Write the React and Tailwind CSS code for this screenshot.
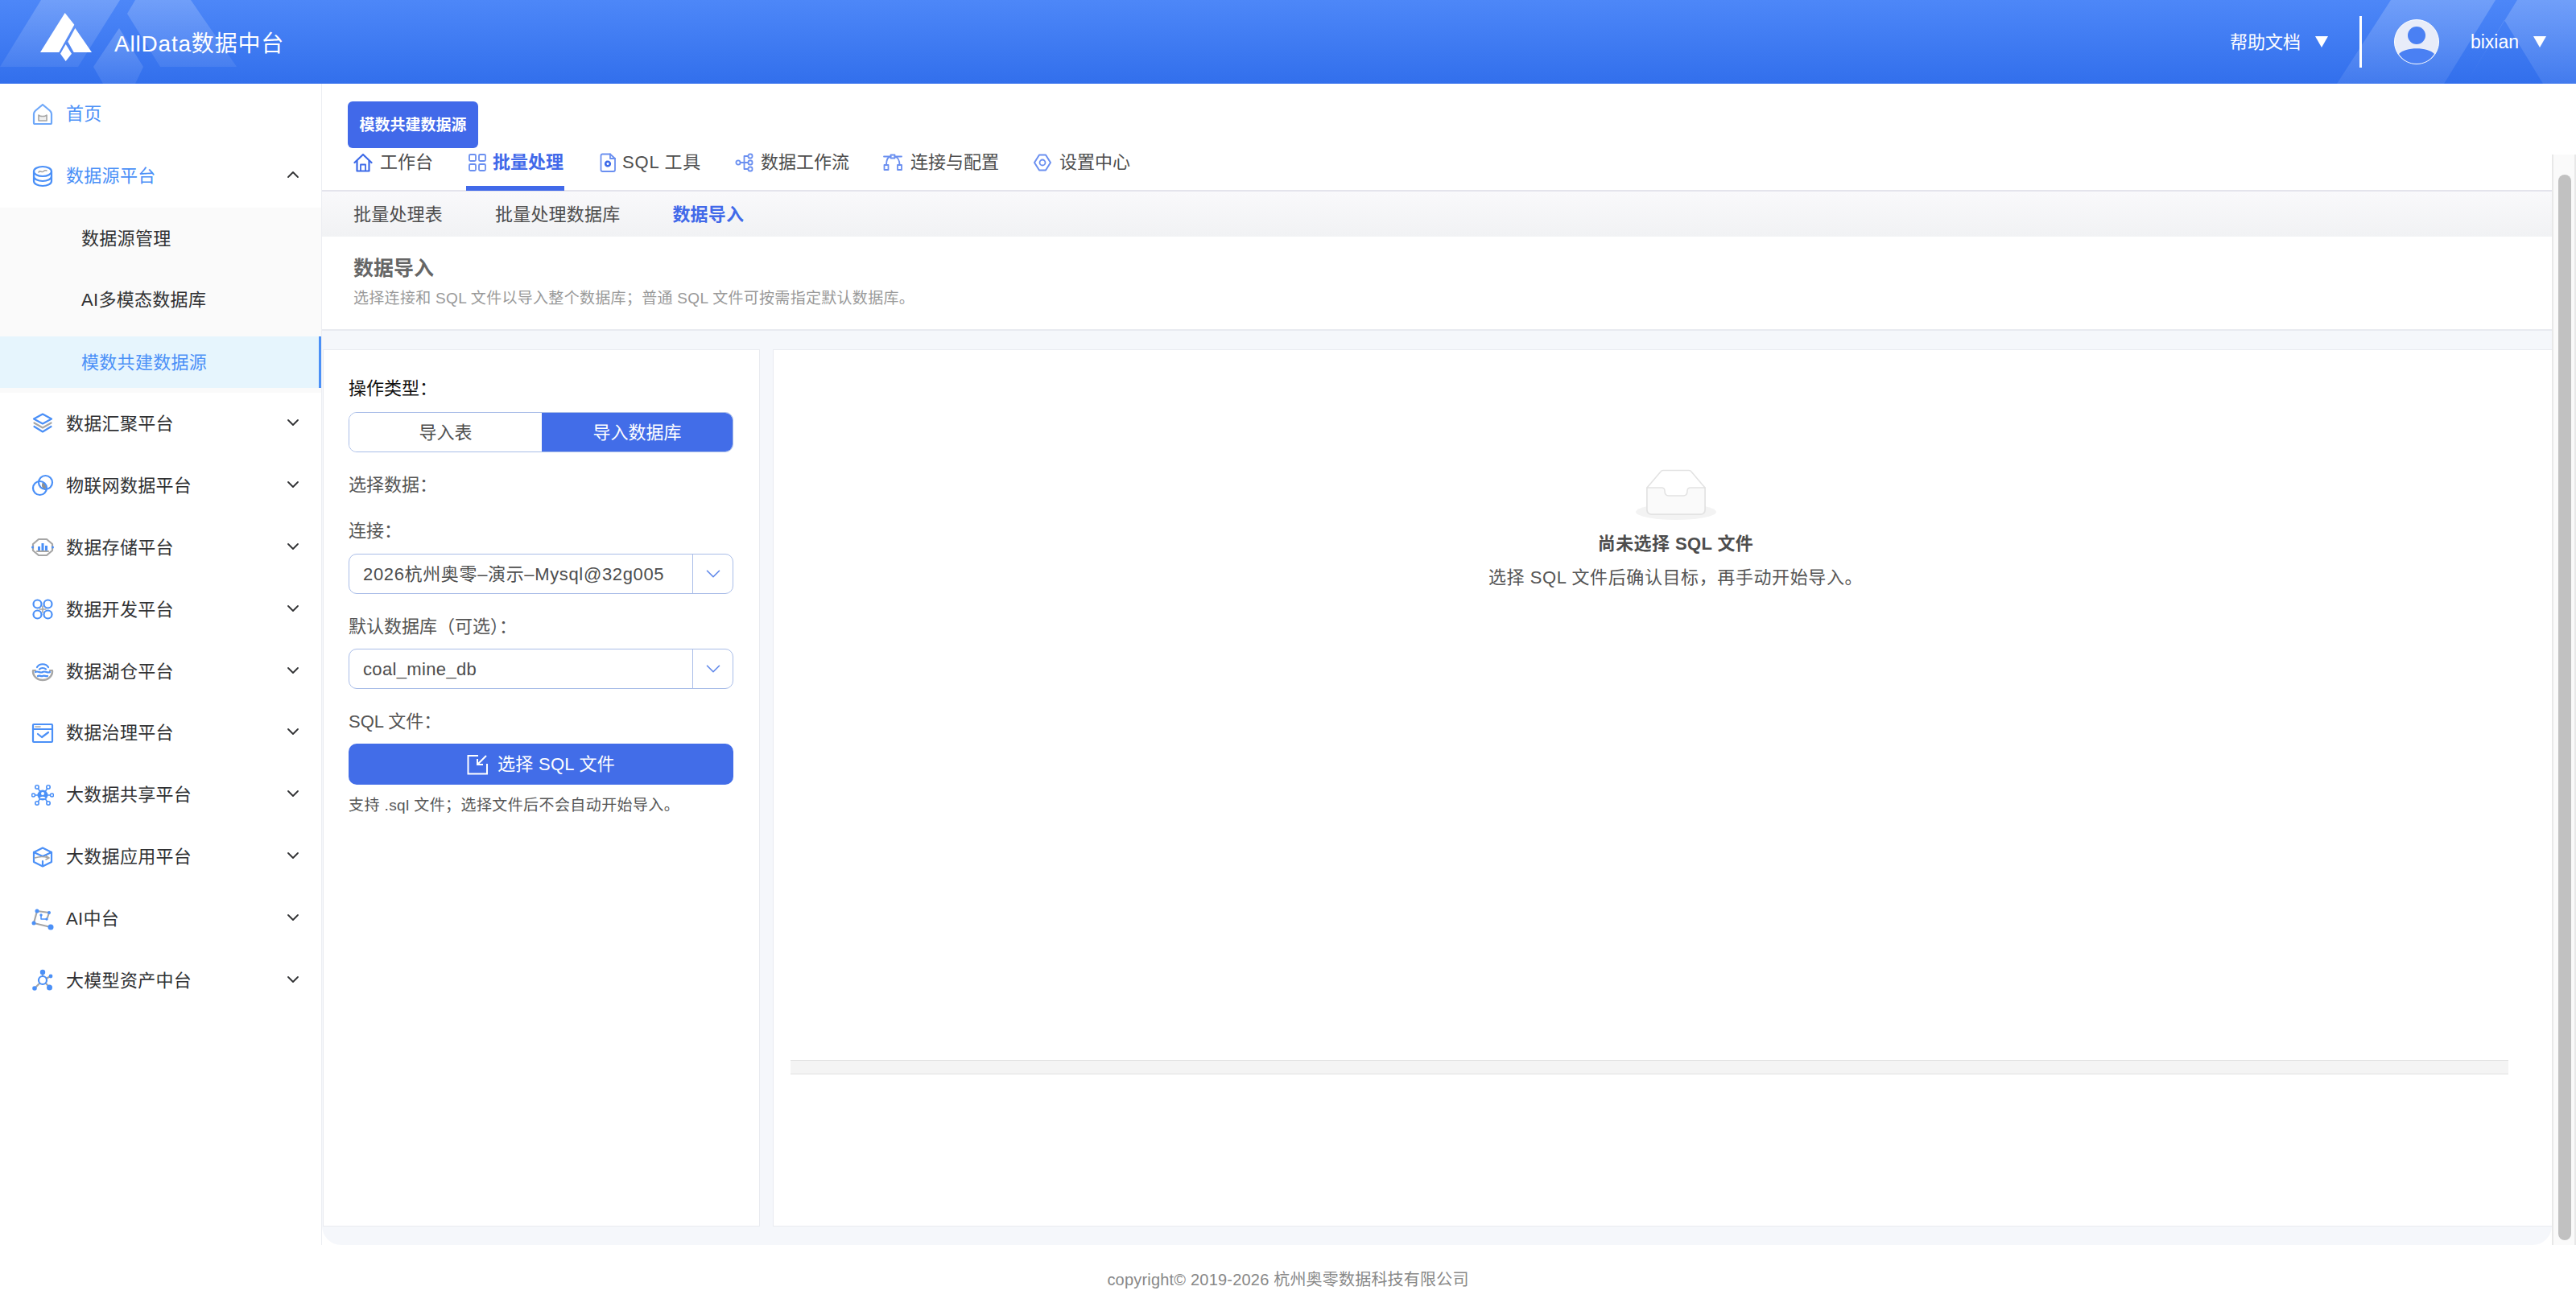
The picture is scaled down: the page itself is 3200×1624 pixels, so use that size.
import { ChevronDown, ChevronUp } from 'lucide-react';

const B = '#4b90f7';
const G = '#a6a6a6';

function Ic({ children, className = 'h-[28px] w-[28px]' }) {
  return (
    <svg viewBox="0 0 28 28" fill="none" className={`shrink-0 ${className}`} stroke={B} strokeWidth="2.2" strokeLinejoin="round" strokeLinecap="round">
      {children}
    </svg>
  );
}

const sideIcons = {
  home: (
    <Ic>
      <path d="M14 2 L23 9.5 C24.5 11 25 12 25 13.5 V24.5 C25 25.5 24.5 26 23.5 26 H4.500 C3.500 26 3 25.500 3 24.500 V13.5 C3 12 3.500 11 5 9.500 Z" stroke="#6fa8f9" />
      <path d="M9 15 V22 H19 V15 C17.500 17 10.500 17 9 15 Z" stroke={G} fill="#efefef" strokeWidth="1.6" />
    </Ic>
  ),
  db: (
    <Ic>
      <ellipse cx="14" cy="8" rx="11" ry="6" />
      <path d="M3 8 V20 C3 23.500 8 26 14 26 C20 26 25 23.500 25 20 V8" />
      <path d="M3 14 C3 17.500 8 20 14 20 C20 20 25 17.500 25 14" />
      <path d="M9 9 C11 6 13 10 15 8 C17 6 18 7 19 7" stroke={G} strokeWidth="1.6" />
    </Ic>
  ),
  layers: (
    <Ic>
      <path d="M14 2.500 L25 8.500 L14 14.500 L3 8.500 Z" />
      <path d="M3.500 13.500 L14 19.500 L24.500 13.500" stroke={G} />
      <path d="M3.500 18 L14 24.500 L24.500 18" />
    </Ic>
  ),
  venn: (
    <Ic>
      <path d="M14 10 C18 12 19 16 17 20 C13 18 12 14 14 10 Z" fill="#8f8f8f" stroke="none" />
      <circle cx="10.500" cy="17.500" r="8.500" />
      <circle cx="17.500" cy="10.500" r="8.500" />
    </Ic>
  ),
  store: (
    <Ic>
      <path d="M9 4 H19 L26 10 V18 L19 24 H9 L2 18 V10 Z" stroke={G} />
      <path d="M7 19 H21" stroke={G} />
      <rect x="8" y="13" width="3" height="5" fill={B} stroke="none" />
      <rect x="12.500" y="9" width="3" height="9" fill={B} stroke="none" />
      <rect x="17" y="12" width="3" height="6" fill={B} stroke="none" />
      <circle cx="1.500" cy="14" r="1.500" fill={B} stroke="none" />
      <circle cx="26.500" cy="14" r="1.500" fill={B} stroke="none" />
    </Ic>
  ),
  grid: (
    <Ic>
      <circle cx="7.500" cy="7.500" r="5" />
      <circle cx="20.500" cy="7.500" r="5" />
      <circle cx="7.500" cy="20.500" r="5" />
      <circle cx="20.500" cy="20.500" r="5" />
      <path d="M14 10 V18 M10 14 H18" stroke={G} strokeWidth="1.600" />
    </Ic>
  ),
  lake: (
    <Ic>
      <path d="M7 9 C10 4 18 4 21 9 M10 11.500 C12 9.500 16 9.500 18 11.500" />
      <path d="M2 13 H5 M23 13 H26" stroke={G} />
      <path d="M2 14 C2 21 8 25 14 25 C20 25 26 21 26 14" stroke={G} strokeWidth="2.500" />
      <path d="M5 15 C8 13 11 17 14 15 C17 13 20 17 23 15 M8 20 C10 18.500 12 21 14 20 C16 18.500 18 21 20 20" />
    </Ic>
  ),
  check: (
    <Ic>
      <rect x="2" y="3" width="24" height="22" rx="1" />
      <path d="M2 9 H26" />
      <path d="M5 6 H11" stroke={G} strokeWidth="1.500" strokeDasharray="1.500 1" />
      <path d="M8 15 L13 19 L21 13" />
    </Ic>
  ),
  share: (
    <Ic>
      <path d="M14 14 L7 4 M14 14 L21 4 M14 14 L7 24 M14 14 L21 24 M14 14 H3 M14 14 H25" strokeWidth="1.500" />
      <circle cx="14" cy="14" r="6.500" fill={B} stroke="none" />
      <circle cx="14" cy="12" r="2" fill="#fff" stroke="none" />
      <path d="M10.500 18 C11 15 17 15 17.500 18 Z" fill="#fff" stroke="none" />
      <g fill="#fff" strokeWidth="1.600">
        <circle cx="7" cy="4" r="2.200" />
        <circle cx="21" cy="4" r="2.200" />
        <circle cx="7" cy="24" r="2.200" />
        <circle cx="21" cy="24" r="2.200" />
        <circle cx="2.500" cy="14" r="2" />
        <circle cx="25.500" cy="14" r="2" />
      </g>
    </Ic>
  ),
  box: (
    <Ic>
      <path d="M14 2.500 L25 8 V20 L14 25.500 L3 20 V8 Z" />
      <path d="M3 8 L14 13 L25 8" />
      <path d="M14 19 V25" />
      <path d="M4 15 C10 13 16 13 21 15 M18 12.500 L22 15 L18 17" stroke={G} strokeWidth="1.600" />
    </Ic>
  ),
  ai: (
    <Ic>
      <path d="M7 4 L22 6 L20 12 M7 4 L3 19 L24 24" stroke={G} />
      <path d="M12 9 V14 H19" stroke={B} strokeWidth="1.500" />
      <circle cx="7" cy="4" r="2.500" fill={B} stroke="none" />
      <circle cx="22" cy="6" r="2" fill={B} stroke="none" />
      <circle cx="3" cy="19" r="2.500" fill={B} stroke="none" />
      <circle cx="24" cy="24" r="3.500" fill={B} stroke="none" />
      <circle cx="12" cy="9" r="1.700" fill={B} stroke="none" />
      <circle cx="19" cy="14" r="1.700" fill={B} stroke="none" />
    </Ic>
  ),
  model: (
    <Ic>
      <path d="M14 4 V14 L5 23 M14 14 L22 22 M14 14 L24 9" stroke={G} />
      <circle cx="14" cy="4" r="3.200" fill={B} stroke="none" />
      <circle cx="24" cy="9" r="2.400" fill={B} stroke="none" />
      <circle cx="4" cy="24" r="2.800" fill={B} stroke="none" />
      <circle cx="22.500" cy="23" r="3.500" fill={B} stroke="none" />
      <circle cx="14" cy="14" r="5" fill="#fff" />
    </Ic>
  ),
};

const platforms = [
  ['layers', '数据汇聚平台'],
  ['venn', '物联网数据平台'],
  ['store', '数据存储平台'],
  ['grid', '数据开发平台'],
  ['lake', '数据湖仓平台'],
  ['check', '数据治理平台'],
  ['share', '大数据共享平台'],
  ['box', '大数据应用平台'],
  ['ai', 'AI中台'],
  ['model', '大模型资产中台'],
];

function Sidebar() {
  return (
    <aside className="w-[400px] shrink-0 border-r border-[#eceef2] bg-white text-[22px] tracking-[0.3px] text-[#303133]">
      <div className="flex h-[75px] items-center pl-[39px] text-[#4b90f7]">
        {sideIcons.home}
        <span className="ml-[15px]">首页</span>
      </div>
      <div className="flex h-[79px] items-center pl-[39px] pr-[23px] text-[#4b90f7]">
        {sideIcons.db}
        <span className="ml-[15px] flex-1">数据源平台</span>
        <ChevronUp size={24} strokeWidth={1.8} className="-mt-[3px] text-[#303133]" />
      </div>
      <div className="bg-[#fafafa] pb-[6px]">
        <div className="flex h-[76px] items-center pl-[101px]">数据源管理</div>
        <div className="flex h-[77px] items-center pl-[101px]">AI多模态数据库</div>
        <div className="mt-[7px] flex h-[64px] items-center border-r-[3px] border-[#4b90f7] bg-[#e6f5fd] pl-[101px] text-[#4b90f7]">模数共建数据源</div>
      </div>
      {platforms.map(([icon, label]) => (
        <div key={label} className="flex h-[76.9px] items-center pl-[39px] pr-[23px]">
          {sideIcons[icon]}
          <span className="ml-[15px] flex-1">{label}</span>
          <ChevronDown size={24} strokeWidth={1.8} className="-mt-[3px] text-[#303133]" />
        </div>
      ))}
    </aside>
  );
}

const tabStroke = '#6a8ff0';

function TabIcon({ children, className = 'h-[24px] w-[24px]' }) {
  return (
    <svg viewBox="0 0 24 24" fill="none" stroke={tabStroke} strokeWidth="1.800" strokeLinejoin="round" strokeLinecap="round" className={`shrink-0 ${className}`}>
      {children}
    </svg>
  );
}

const tabs = [
  {
    label: '工作台',
    w: 'w-[140px]',
    gap: 'gap-[9px]',
    icon: (
      <TabIcon>
        <path d="M1.500 12 L12 2 L22.500 12" stroke="#3d6ae8" strokeWidth="2.200" />
        <path d="M4.500 10 V22.500 H19.500 V10" stroke="#3d6ae8" strokeWidth="2.200" />
        <path d="M9 22 V14.500 H15 V22" stroke="#3d6ae8" />
      </TabIcon>
    ),
  },
  {
    label: '批量处理',
    w: 'w-[164px]',
    gap: 'gap-[7px]',
    active: true,
    icon: (
      <TabIcon>
        <rect x="2" y="2" width="8" height="8" rx="1.500" />
        <rect x="14" y="2" width="8" height="8" rx="1.500" />
        <rect x="2" y="14" width="8" height="8" rx="1.500" />
        <rect x="14" y="14" width="8" height="8" rx="1.500" />
      </TabIcon>
    ),
  },
  {
    label: 'SQL 工具',
    w: 'w-[170px]',
    gap: 'gap-[6px] tracking-[0.8px]',
    icon: (
      <TabIcon>
        <path d="M3.500 3.500 Q3.500 1.500 5.500 1.500 H15 L21 7 V21 Q21 23 19 23 H5.500 Q3.500 23 3.500 21 Z" />
        <path d="M15 1.500 V7 H21" />
        <circle cx="12" cy="13.500" r="2.800" stroke="#3d6ae8" strokeWidth="2.600" strokeDasharray="2 1.200" />
      </TabIcon>
    ),
  },
  {
    label: '数据工作流',
    w: 'w-[184px]',
    gap: 'gap-[8px]',
    icon: (
      <TabIcon>
        <circle cx="4" cy="12" r="2.600" />
        <rect x="16.500" y="1.500" width="5" height="5" rx="2" />
        <rect x="16.500" y="9.500" width="5" height="5" rx="2" />
        <rect x="16.500" y="17.500" width="5" height="5" rx="2" />
        <path d="M7 12 H16 M11.500 12 V4 H16 M11.500 12 V20 H16" />
      </TabIcon>
    ),
  },
  {
    label: '连接与配置',
    w: 'w-[186px]',
    gap: 'gap-[10px]',
    icon: (
      <TabIcon>
        <rect x="1.500" y="15" width="5" height="6" />
        <rect x="18" y="15" width="5" height="6" />
        <rect x="9.500" y="2.500" width="5" height="4" />
        <path d="M4 15 C4 9 6 5 9.500 4.500 M20.500 15 C20.500 9 18 5 14.500 4.500 M1 4.500 H9.500 M14.500 4.500 H23" />
      </TabIcon>
    ),
  },
  {
    label: '设置中心',
    w: 'w-[130px]',
    gap: 'gap-[9px]',
    icon: (
      <TabIcon>
        <path d="M8 2.500 H16 L22 12 L16 21.500 H8 L2 12 Z" strokeWidth="2" />
        <circle cx="12" cy="12" r="3.500" />
      </TabIcon>
    ),
  },
];

function Tabs() {
  return (
    <div className="flex h-[54px] border-b-2 border-[#e4e4ec] pl-[39px] text-[22px] text-[#4d4d4d]">
      {tabs.map((t) => (
        <div key={t.label} className={`flex h-[53px] shrink-0 ${t.w}`}>
          <div className={`flex items-start pt-[6px] ${t.gap} ${t.active ? 'h-[53px] border-b-[6px] border-[#4169e9] pl-[2px] pr-[1px] font-bold text-[#4169e9]' : ''}`}>
            {t.icon}
            <span className="leading-[24px]">{t.label}</span>
          </div>
        </div>
      ))}
    </div>
  );
}

function Select({ value, spacing }) {
  return (
    <div className="flex h-[50px] rounded-[10px] border-[1.5px] border-[#a9bde8] bg-white">
      <div className={`flex flex-1 items-center pl-[17px] text-[22px] text-[#4d4d4d] ${spacing}`}>{value}</div>
      <div className="flex w-[50px] items-center justify-center border-l-[1.5px] border-[#a9bde8]">
        <ChevronDown size={30} strokeWidth={1.3} className="text-[#5f88ea]" />
      </div>
    </div>
  );
}

function LeftPanel() {
  return (
    <div className="ml-[1px] w-[543px] shrink-0 border-[1.5px] border-[#e9ebf0] bg-white pl-[31px] pr-[32px] pt-[32px] text-[22px] text-[#555]">
      <div className="leading-[32px] text-[#111]">操作类型：</div>
      <div className="mt-[13px] flex h-[50px] overflow-hidden rounded-[10px] border-[1.5px] border-[#a9bde8]">
        <div className="flex w-[239px] items-center justify-center bg-white text-[#4d4d4d]">导入表</div>
        <div className="flex flex-1 items-center justify-center bg-[#426de8] text-white">导入数据库</div>
      </div>
      <div className="mt-[25px] leading-[32px]">选择数据：</div>
      <div className="mt-[25px] leading-[32px]">连接：</div>
      <div className="mt-[12px]"><Select value="2026杭州奥零–演示–Mysql@32g005" spacing="tracking-[0.65px]" /></div>
      <div className="mt-[25px] leading-[32px]">默认数据库（可选）：</div>
      <div className="mt-[11px]"><Select value="coal_mine_db" spacing="tracking-[0.35px]" /></div>
      <div className="mt-[25px] leading-[32px]">SQL 文件：</div>
      <button type="button" className="mt-[11px] flex h-[51px] w-full items-center justify-center gap-[12px] rounded-[10px] bg-[#426de8] text-white">
        <svg viewBox="0 0 26 26" fill="none" stroke="#fff" strokeWidth="2" className="h-[26px] w-[26px]">
          <path d="M14 2 H1.500 V24.500 H25 V12" />
          <path d="M24 2 L13 13 M13 6 V13 H20" />
        </svg>
        <span className="tracking-[0.3px]">选择 SQL 文件</span>
      </button>
      <div className="mt-[14px] text-[19px] leading-[24px] tracking-[0.4px] text-[#555]">支持 .sql 文件；选择文件后不会自动开始导入。</div>
    </div>
  );
}

function RightPanel() {
  return (
    <div className="flex min-w-0 flex-1 flex-col border-y-[1.5px] border-l-[1.5px] border-[#e9ebf0] bg-white">
      <div className="flex flex-col items-center pl-[32px]">
        <svg viewBox="0 0 100 64" className="mt-[148px] h-[64px] w-[100px]">
          <ellipse cx="50" cy="53" rx="50" ry="10" fill="#f3f3f3" />
          <path d="M14 23 L31 3 Q32 1.500 34 1.500 H66 Q68 1.500 69 3 L86 23 V50 Q86 56 80 56 H20 Q14 56 14 50 Z" fill="#fff" stroke="#e2e2e2" strokeWidth="1.500" />
          <path d="M14 23 H32 Q36 23 36 27 Q36 33 41 33 H59 Q64 33 64 27 Q64 23 68 23 H86 V50 Q86 56 80 56 H20 Q14 56 14 50 Z" fill="#fafafa" stroke="#e2e2e2" strokeWidth="1.500" />
        </svg>
        <div className="mt-[13px] text-[22px] font-bold leading-[32px] tracking-[0.4px] text-[#4d4d4d]">尚未选择 SQL 文件</div>
        <div className="mt-[10px] text-[22px] leading-[32px] tracking-[0.6px] text-[#555]">选择 SQL 文件后确认目标，再手动开始导入。</div>
      </div>
      <div className="mb-[188px] ml-[21px] mr-[54px] mt-auto h-[18px] border-y-[1.5px] border-[#e0e0e0] bg-[#f4f4f4]" />
    </div>
  );
}

function Main() {
  return (
    <main className="flex min-w-0 flex-1 flex-col">
      <div className="pl-[32px] pt-[22px]">
        <button type="button" className="flex h-[58px] w-[162px] items-center justify-center rounded-[6px] bg-[#4169e9] pt-[2px] text-[19px] font-bold text-white">模数共建数据源</button>
      </div>
      <Tabs />
      <div className="flex h-[56px] items-center gap-[65px] bg-gradient-to-b from-[#f9f9fb] to-[#f1f2f4] pl-[39px] text-[22px] tracking-[0.2px] text-[#4d4d4d]">
        <span>批量处理表</span>
        <span>批量处理数据库</span>
        <span className="font-bold text-[#4169e9]">数据导入</span>
      </div>
      <div className="h-[117px] border-b-2 border-[#e8eaf0] pl-[39px] pt-[21px]">
        <div className="text-[25px] font-bold leading-[36px] text-[#666]">数据导入</div>
        <div className="mt-[6px] text-[19px] leading-[28px] tracking-[0.3px] text-[#999]">选择连接和 SQL 文件以导入整个数据库；普通 SQL 文件可按需指定默认数据库。</div>
      </div>
      <div className="h-[1136px] w-[2770px] rounded-b-[24px] bg-[#f5f7fb] pb-[23px] pt-[23px]">
        <div className="flex h-full gap-[16px]">
          <LeftPanel />
          <RightPanel />
        </div>
      </div>
    </main>
  );
}

function Header() {
  return (
    <header className="relative flex h-[104px] shrink-0 items-center bg-gradient-to-b from-[#4d87f8] to-[#326fec] text-white">
      <svg viewBox="0 0 3200 104" className="absolute inset-0 h-full w-full" preserveAspectRatio="none">
        <defs>
          <linearGradient id="hl" x1="0" y1="0" x2="0" y2="1">
            <stop offset="0" stopColor="#fff" stopOpacity="0.2" />
            <stop offset="1" stopColor="#fff" stopOpacity="0.08" />
          </linearGradient>
        </defs>
        <path d="M0 83 L51 0 H149 L97 83 Z" fill="url(#hl)" />
        <path d="M158 17 L168 0 H237 L294 83 H199 Z" fill="url(#hl)" />
        <path d="M116 83 L148 35 L178 83 L168 104 H128 Z" fill="url(#hl)" />
        <path d="M2903 104 L2970 0 H3100 L3036 104 Z" fill="url(#hl)" />
        <path d="M3063 104 L3127 0 H3200 V104 H3159 L3111 25 Z" fill="url(#hl)" />
      </svg>
      <svg viewBox="0 0 252 210" className="absolute left-[40px] top-[10px] h-[70px] w-[84px]" fill="#fff">
        <path d="M122 18 L157 62 L100 165 H30 Z" />
        <path d="M160 75 L222 165 H155 L133 125 Z" />
        <path d="M125 135 L147 170 L125 198 L105 170 Z" />
      </svg>
      <div className="relative ml-[142px] pt-[6px] text-[28px] tracking-[0.8px]">AllData数据中台</div>
      <div className="relative ml-auto flex h-full items-center pr-[37px] text-[22px]">
        <span>帮助文档</span>
        <span className="ml-[18px] h-0 w-0 border-x-[8px] border-t-[14px] border-x-transparent border-t-white" />
        <span className="ml-[39px] h-[64px] w-[3px] bg-white" />
        <svg viewBox="0 0 56 56" className="ml-[40px] h-[56px] w-[56px]">
          <circle cx="28" cy="28" r="27.500" fill="#e8ecf9" stroke="#fff" strokeWidth="1" />
          <circle cx="28" cy="20" r="11" fill="#4a80f3" />
          <path d="M6 43 C14 34 42 34 50 43 C45 51 37 55 28 55 C19 55 11 51 6 43 Z" fill="#4a80f3" />
        </svg>
        <span className="ml-[39px] text-[23px]">bixian</span>
        <span className="ml-[18px] h-0 w-0 border-x-[8px] border-t-[14px] border-x-transparent border-t-white" />
      </div>
    </header>
  );
}

export default function App() {
  return (
    <div className="relative flex h-[1624px] w-[3200px] flex-col overflow-hidden bg-white [font-family:'Liberation_Sans','Noto_Sans_CJK_SC',sans-serif]">
      <Header />
      <div className="flex h-[1443px] shrink-0">
        <Sidebar />
        <Main />
      </div>
      <div className="pt-[28px] text-center text-[20px] leading-[30px] tracking-[0.2px] text-[#888]">copyright© 2019-2026 杭州奥零数据科技有限公司</div>
      <div className="absolute right-0 top-[192px] h-[1355px] w-[30px] border-x-2 border-[#e8e8e8] bg-[#fafafa]">
        <div className="absolute left-[6px] top-[25px] h-[1324px] w-[16px] rounded-full bg-[#c1c1c1]" />
      </div>
    </div>
  );
}
